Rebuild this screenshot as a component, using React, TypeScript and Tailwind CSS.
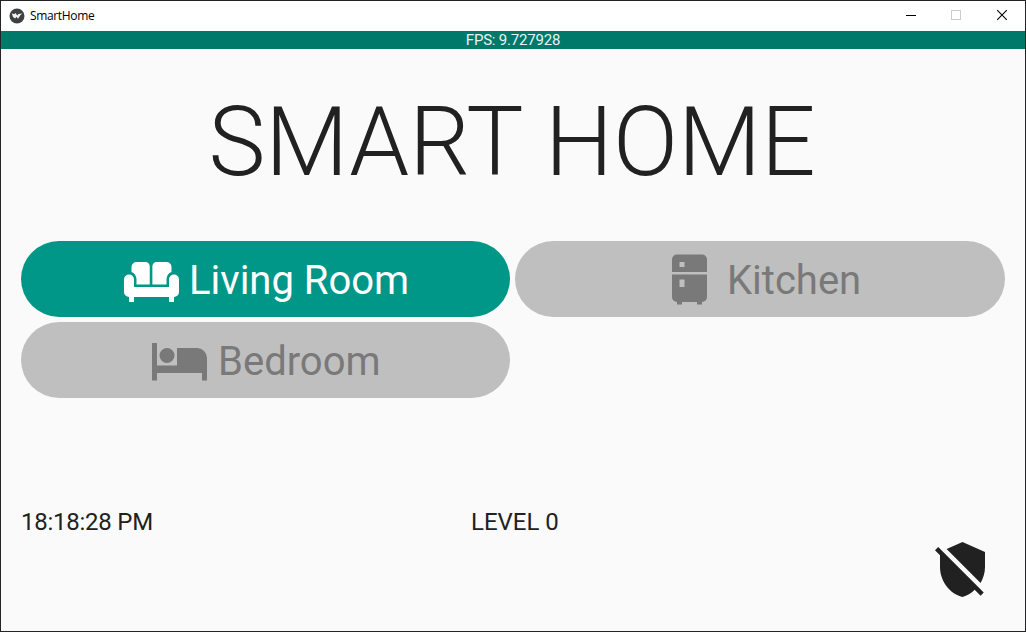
import type { ReactNode } from "react";

const ICONS = {
  sofa: "M6 14V12C6 10.5 5.2 9.4 4 9V7A2 2 0 0 1 6 5H9.6A1.7 1.7 0 0 1 11.3 6.7V14ZM12.35 14V6.7A1.7 1.7 0 0 1 14.05 5H18A2 2 0 0 1 20 7V9C18.8 9.4 18 10.5 18 12V14ZM3 10A2 2 0 0 1 5 12V15H19V12A2 2 0 0 1 23 12V17A2 2 0 0 1 21 19V21H19V19H5V21H3V19A2 2 0 0 1 1 17V12A2 2 0 0 1 3 10Z",
  fridge:
    "M7,2H17A2,2 0 0,1 19,4V9H5V4A2,2 0 0,1 7,2M19,19A2,2 0 0,1 17,21V22H15V21H9V22H7V21A2,2 0 0,1 5,19V10H19V19M8,5V7H10V5H8M8,12V15H10V12H8Z",
  bed: "M19,7H11V14H3V5H1V20H3V17H21V20H23V11A4,4 0 0,0 19,7M7,13A3,3 0 0,0 10,10A3,3 0 0,0 7,7A3,3 0 0,0 4,10A3,3 0 0,0 7,13Z",
  shieldOff:
    "M1,4.27L2.28,3L20.5,21.22L19.23,22.5L16.87,20.14C15.5,21.57 13.82,22.6 12,23C6.84,21.74 3,16.55 3,11V6.27L1,4.27M12,1L21,5V11C21,13.28 20.35,15.5 19.23,17.41L5.65,3.82L12,1Z",
};

function Icon({ name, className = "" }: { name: keyof typeof ICONS; className?: string }) {
  return (
    <svg viewBox="0.2 0.2 24 24" className={`size-[60px] shrink-0 ${className}`} fill="currentColor" fillRule="evenodd">
      <path d={ICONS[name]} />
    </svg>
  );
}

function RoomButton({ active, className, children }: { active?: boolean; className: string; children: ReactNode }) {
  return (
    <button
      className={`flex h-[76px] items-center rounded-full pt-px text-[40px] leading-[72px] ${className} ${
        active ? "bg-[#009688] text-white" : "bg-[#bfbfbf] text-[#797979]"
      }`}
    >
      {children}
    </button>
  );
}

function TitleBar() {
  return (
    <header className="flex h-[30px] items-center bg-white text-black">
      <svg viewBox="0 0 16 16" className="ml-2 size-4">
        <circle cx="8" cy="8" r="7.5" fill="#3e4042" />
        <path d="M2.8 5.2 5 6.2 6.6 5 8.2 7.4 9.4 5.9 13.4 5.6 11.5 7 9 10.7 7.4 8.8 6.2 10.5 4 8.9Z" fill="#f2f2f2" />
      </svg>
      <span className="ml-[5px] font-['Open_Sans',sans-serif] text-[12px] leading-4 tracking-[-0.35px]">SmartHome</span>
      <div className="ml-auto flex" aria-hidden="true">
        <svg width="46" height="30" viewBox="0 0 46 30" shapeRendering="crispEdges">
          <path d="M19 14.5h10" stroke="#000" />
        </svg>
        <svg width="46" height="30" viewBox="0 0 46 30" shapeRendering="crispEdges">
          <path d="M18.5 9.5h9v9h-9z" fill="none" stroke="#ccc" />
        </svg>
        <svg width="46" height="30" viewBox="0 0 46 30">
          <path d="M18.2 9.2l9.6 9.6M27.8 9.2l-9.6 9.6" stroke="#000" strokeWidth="1.1" />
        </svg>
      </div>
    </header>
  );
}

export default function App() {
  return (
    <div className="flex h-[632px] w-[1026px] flex-col border border-[#242326] bg-[#fafafa] font-[Roboto,sans-serif] text-[#212121]">
      <TitleBar />
      <div className="h-[18px] bg-[#00796b] text-center text-[15px] leading-[18px] tracking-[-0.2px] text-[#e8f3f1]">
        FPS: 9.727928
      </div>
      <main className="flex flex-1 flex-col px-5">
        <h1 className="mt-[37px] pr-[2px] text-center text-[96px] leading-[112px] font-light tracking-[-0.05px]">SMART HOME</h1>
        <div className="mt-[43px] grid grid-cols-[489px_490px] gap-[5px]">
          <RoomButton active className="pl-[101px]">
            <Icon name="sofa" />
            <span className="ml-[7px] pt-[3px]">Living Room</span>
          </RoomButton>
          <RoomButton className="pl-[144.5px]">
            <Icon name="fridge" />
            <span className="ml-[7.5px] pt-[3px]">Kitchen</span>
          </RoomButton>
          <RoomButton className="pl-[129px]">
            <Icon name="bed" />
            <span className="ml-[8px] pt-[3px]">Bedroom</span>
          </RoomButton>
        </div>
        <div className="mt-[110px] flex text-[24px] leading-7">
          <span className="w-[450px] tracking-[-0.25px]">18:18:28 PM</span>
          <span>LEVEL 0</span>
        </div>
        <Icon name="shieldOff" className="mt-[4px] mr-[12px] self-end" />
      </main>
    </div>
  );
}
